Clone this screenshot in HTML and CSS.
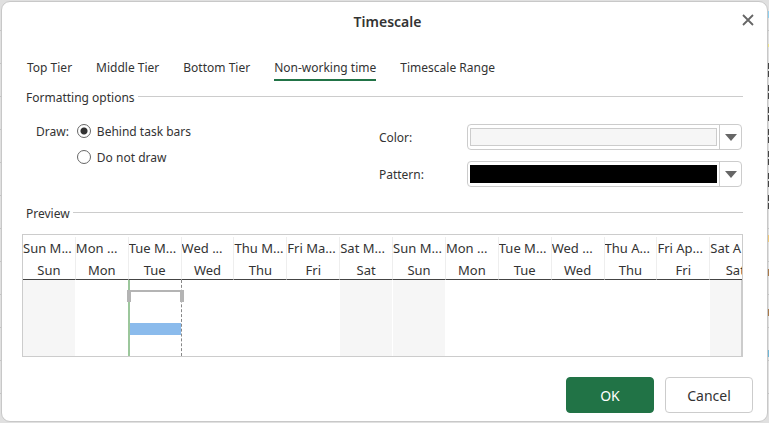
FILE: index.html
```html
<!DOCTYPE html>
<html lang="en">
<head>
  <meta charset="UTF-8">
  <meta name="viewport" content="width=device-width, initial-scale=1.0">
  <title>Timescale</title>
  <link rel="stylesheet" href="styles.css">
</head>
<body>
  <div class="dialog" role="dialog" aria-labelledby="title">
    <header class="dialog-header">
      <h1 id="title">Timescale</h1>
      <button type="button" class="close" aria-label="Close">
        <svg width="12" height="12" viewBox="0 0 12 12"><path d="M1 1l10 10M11 1L1 11" stroke="#666" stroke-width="1.8" fill="none"/></svg>
      </button>
    </header>

    <nav class="tabs" role="tablist">
      <button type="button" class="tab" role="tab">Top Tier</button>
      <button type="button" class="tab" role="tab">Middle Tier</button>
      <button type="button" class="tab" role="tab">Bottom Tier</button>
      <button type="button" class="tab active" role="tab" aria-selected="true">Non-working time</button>
      <button type="button" class="tab" role="tab">Timescale Range</button>
    </nav>

    <h2 class="section-title">Formatting options</h2>
    <form class="options">
      <div class="draw" role="radiogroup" aria-labelledby="drawLabel">
        <span id="drawLabel">Draw:</span>
        <div class="radios">
          <label><input type="radio" name="draw" checked> Behind task bars</label>
          <label><input type="radio" name="draw"> Do not draw</label>
        </div>
      </div>
      <div class="fields">
        <label for="color">Color:</label>
        <div class="picker">
          <select id="color"><option aria-label="Light gray"></option></select>
          <span class="swatch swatch-color"></span>
          <span class="arrow"><svg width="12" height="7" viewBox="0 0 12 7"><path d="M0 0h12L6 7z" fill="#666"/></svg></span>
        </div>
        <label for="pattern">Pattern:</label>
        <div class="picker">
          <select id="pattern"><option aria-label="Solid"></option></select>
          <span class="swatch swatch-pattern"></span>
          <span class="arrow"><svg width="12" height="7" viewBox="0 0 12 7"><path d="M0 0h12L6 7z" fill="#666"/></svg></span>
        </div>
      </div>
    </form>

    <h2 class="section-title">Preview</h2>
    <table class="preview">
      <thead>
        <tr class="dates">
          <th>Sun M...</th><th>Mon ...</th><th>Tue M...</th><th>Wed ...</th><th>Thu M...</th><th>Fri Ma...</th><th>Sat M...</th>
          <th>Sun M...</th><th>Mon ...</th><th>Tue M...</th><th>Wed ...</th><th>Thu A...</th><th>Fri Ap...</th><th>Sat A</th>
        </tr>
        <tr class="days">
          <th>Sun</th><th>Mon</th><th>Tue</th><th>Wed</th><th>Thu</th><th>Fri</th><th>Sat</th>
          <th>Sun</th><th>Mon</th><th>Tue</th><th>Wed</th><th>Thu</th><th>Fri</th><th><span>Sat</span></th>
        </tr>
      </thead>
      <tbody>
        <tr class="chart">
          <td class="off"></td><td></td>
          <td class="today"><div class="summary"></div><div class="task"></div></td>
          <td></td><td></td><td></td><td class="off"></td>
          <td class="off"></td><td></td><td></td><td></td><td></td><td></td><td class="off last"></td>
        </tr>
      </tbody>
    </table>

    <footer class="buttons">
      <button type="button" class="btn btn-ok">OK</button>
      <button type="button" class="btn">Cancel</button>
    </footer>
  </div>
</body>
</html>
```
FILE: styles.css
```css
* { box-sizing: border-box; }
body {
  margin: 0;
  padding: 1px 1px 2px;
  font-family: "Noto Sans", "Open Sans", sans-serif;
  font-size: 13px;
  color: #333;
  background:
    linear-gradient(#8fd0f0, #8fd0f0) 100% 11px / 1px 7px no-repeat,
    linear-gradient(#f0e68c, #f0e68c) 100% 44px / 1px 3px no-repeat,
    repeating-linear-gradient(#444 0 6px, #ddd 6px 8px, #444 8px 14px, #ddd 14px 22px) 100% 63px / 1px 146px no-repeat,
    linear-gradient(#efc97b, #efc97b) 100% 235px / 1px 7px no-repeat,
    linear-gradient(#a8794a, #a8794a) 100% 269px / 1px 7px no-repeat,
    linear-gradient(#a8794a, #a8794a) 100% 309px / 1px 7px no-repeat,
    linear-gradient(#6fb7d8, #6fb7d8) 100% 350px / 1px 7px no-repeat,
    repeating-linear-gradient(#e0e0e0 0 30px, #c4c4c4 30px 31px, #e0e0e0 31px 33px);
}
button { font: inherit; color: inherit; padding: 0; border: none; background: none; cursor: pointer; }
svg { display: block; }

.dialog { padding: 0 24px 8px 20px; background: #fff; border: 1px solid #c8c8c8; border-radius: 9px; }
.dialog-header { position: relative; height: 56px; padding-top: 10px; }
.dialog-header h1 { margin: 0; padding-left: 10px; text-align: center; font-size: 14px; line-height: 20px; font-weight: 600; }
.close { position: absolute; top: 12px; right: -11px; }

.tabs { display: flex; gap: 24px; height: 30px; padding-left: 5px; font-size: 12px; }
.tab { height: 23px; padding-bottom: 2px; line-height: 18px; border-bottom: 2px solid transparent; }
.active { border-bottom-color: #217346; }

.section-title { display: flex; align-items: center; gap: 3px; margin: 0; padding-left: 4px; font-size: 12px; line-height: 20px; font-weight: 400; }
.section-title::after { content: ""; flex: 1; height: 1px; margin-bottom: 3px; background: #ccc; }

.options { display: grid; grid-template-columns: 17fr 18fr; height: 96px; padding: 14px 1px 0 14px; font-size: 12px; }
.draw { display: flex; gap: 8px; line-height: 20px; }
.radios { display: flex; flex-direction: column; gap: 6px; }
.radios label { display: flex; gap: 6px; }
.radios input { appearance: none; width: 14px; height: 14px; margin: 2px 0 0; border: 1px solid #666; border-radius: 50%; }
.radios input:checked { background: radial-gradient(circle, #333 3px, #fff 4px); }
.fields { display: grid; grid-template-columns: 88px 1fr; grid-auto-rows: 26px; gap: 11px 0; padding-top: 2px; align-items: center; }
.picker { display: flex; position: relative; height: 26px; padding: 3px 0 3px 2px; border: 1px solid #ccc; border-radius: 4px; }
.picker select { position: absolute; inset: 0; width: 100%; opacity: 0; }
.swatch { flex: 1; pointer-events: none; }
.swatch-color { background: #f6f6f6; border: 1px solid #ccc; }
.swatch-pattern { background: #000; }
.arrow { display: flex; align-items: center; justify-content: center; width: 22px; margin: -3px 0 -3px 2px; border-left: 1px solid #ccc; pointer-events: none; }

.preview { display: block; margin-top: 10px; border: 1px solid #ccc; overflow: hidden; font-size: 13px; }
.preview thead, .preview tbody { display: block; }
.preview tr { display: grid; grid-template-columns: repeat(13, minmax(0, 5fr)) minmax(0, 3fr); }
.preview th { padding: 0; height: 22px; line-height: 22px; font-weight: 400; white-space: nowrap; overflow: hidden; border-right: 1px solid #eee; }
.preview .dates { padding-top: 2px; }
.preview .dates th { text-align: left; }
.preview .days th { height: 21px; border-bottom: 1px solid #444; }
.preview th:last-child { border-right: none; }
.days span { display: block; width: 50px; }
.preview td { padding: 0; height: 76px; border-right: 1px solid transparent; }
.preview .off { background: #f6f6f6; background-clip: padding-box; }
.preview .last { border-right-color: #ccc; }
.preview .today { position: relative; margin-left: -1px; border-right: 1px dashed #888; border-left: 2px solid #9cc79c; }
.summary { position: absolute; top: 10px; left: -3px; right: -3px; height: 12px; border: 4px solid #b4b4b4; border-top-width: 2px; border-bottom: none; }
.task { margin-top: 43px; height: 12px; background: #8bbbec; }

.buttons { display: flex; justify-content: flex-end; gap: 11px; margin: 20px -10px 0 0; }
.btn { width: 88px; height: 36px; font-size: 14px; border: 1px solid #ccc; border-radius: 4px; background: #fff; }
.btn-ok { color: #fff; background: #217346; border-color: #217346; }
```
